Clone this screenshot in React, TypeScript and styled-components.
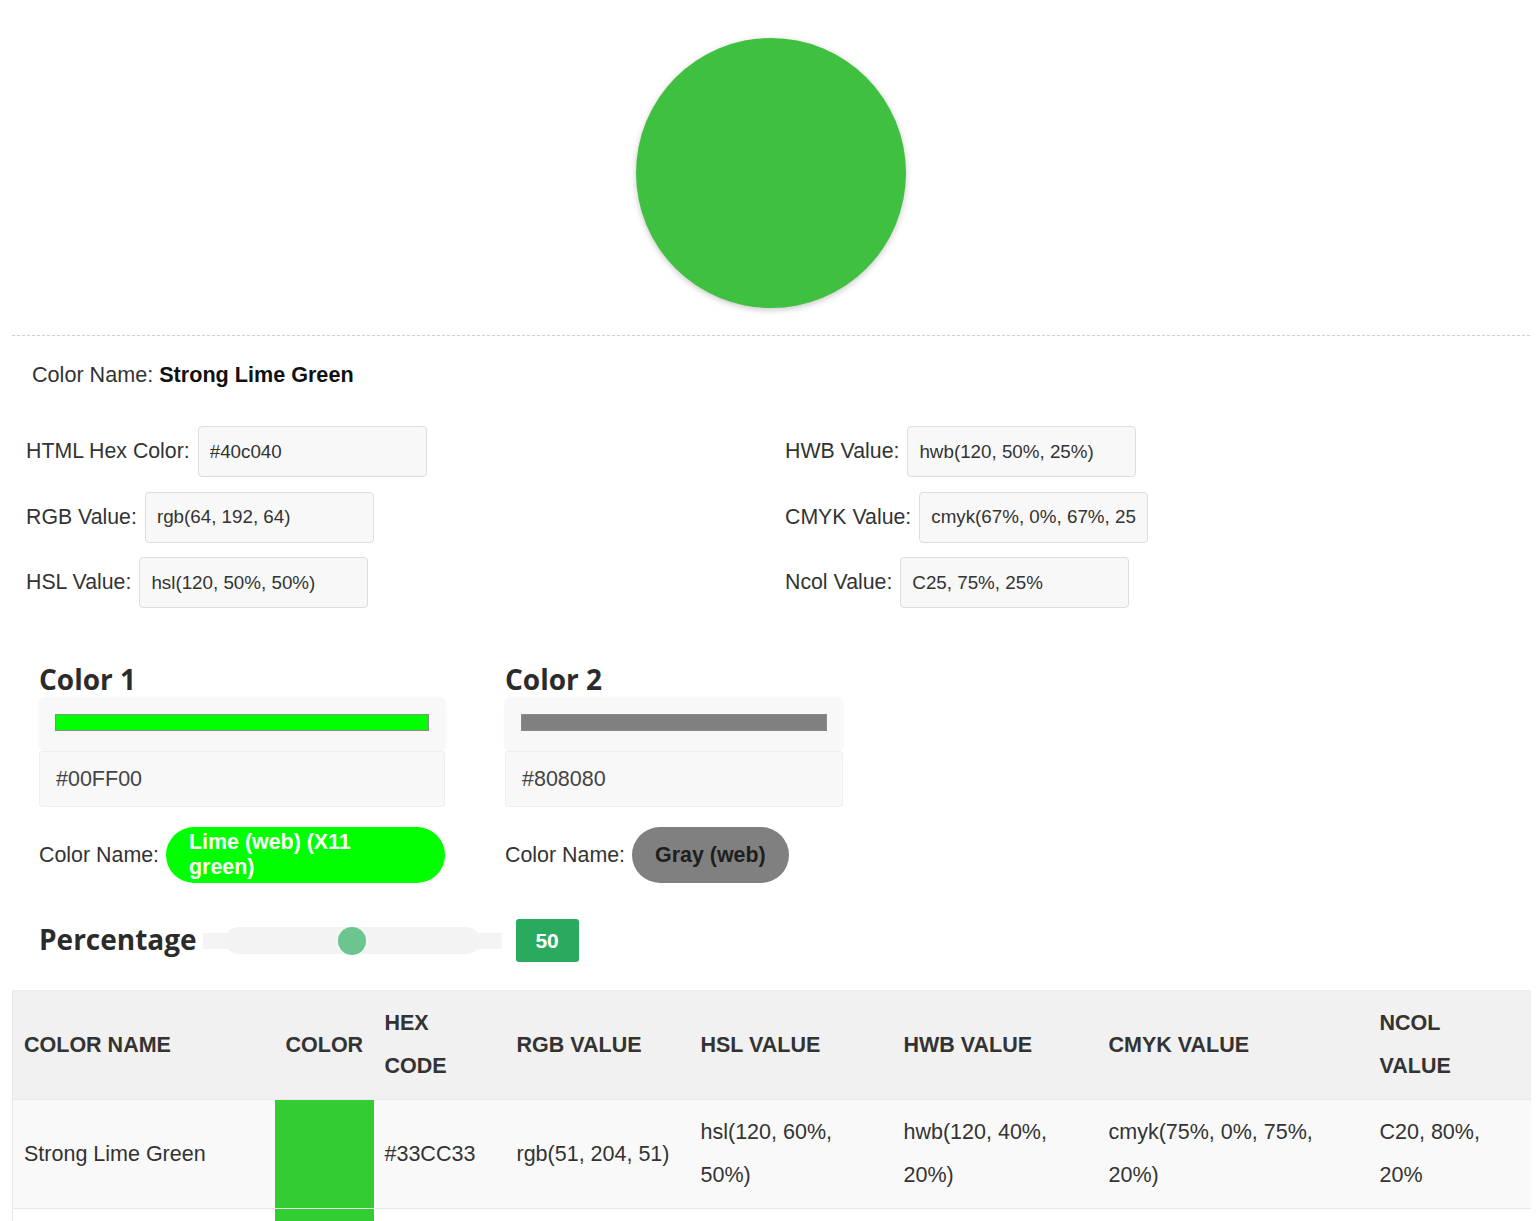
import React from 'react'
import styled, { createGlobalStyle } from 'styled-components'

const GlobalStyle = createGlobalStyle`
    body {
        margin: 0;
        background: #ffffff;
        font-family: 'Liberation Sans', Arial, sans-serif;
        color: #333333;
    }
    * {
        box-sizing: border-box;
    }
`

const Page = styled.div`
    padding: 0 6px 0 12px;
`

const Preview = styled.div`
    display: flex;
    justify-content: center;
    padding: 38px 0 27px;
    border-bottom: 1px dashed #d0d0d0;
`

const Swatch = styled.div<{ color: string }>`
    width: 270px;
    height: 270px;
    border-radius: 50%;
    background: ${(props) => props.color};
    box-shadow: 0 2px 6px rgba(0, 0, 0, 0.22);
`

const NameLine = styled.div`
    margin-top: 26px;
    padding-left: 20px;
    font-size: 21.6px;
    line-height: 26px;
    color: #333;

    strong {
        color: #111;
    }
`

const ValueGrid = styled.div`
    display: grid;
    grid-template-columns: 1fr 1fr;
    margin-top: 38px;
`

const ValueColumn = styled.div`
    display: flex;
    flex-direction: column;
    gap: 14.5px;
    padding: 0 14px;
`

const ValueRow = styled.label`
    display: flex;
    align-items: center;
    gap: 8px;
    font-size: 21.3px;
    color: #333;
`

const ValueInput = styled.input`
    width: 229px;
    height: 51px;
    padding: 0 11px;
    border: 1px solid #dddddd;
    border-radius: 4px;
    background: #f8f8f8;
    font-family: 'Liberation Sans', Arial, sans-serif;
    font-size: 18.8px;
    color: #333;
    outline: none;
`

const MixRow = styled.div`
    display: flex;
    gap: 60px;
    margin-top: 53px;
    padding-left: 27px;
`

const MixColumn = styled.div<{ width: number }>`
    width: ${(props) => props.width}px;
`

const Heading = styled.h2`
    margin: 0;
    font-family: 'Open Sans', sans-serif;
    font-weight: 700;
    font-size: 28px;
    line-height: 36px;
    color: #2b2b2b;
`

const BarCard = styled.div`
    height: 53px;
    padding: 17px 16px 0;
    border-radius: 6px;
    background: #f8f8f8;
    box-shadow: 0 1px 3px rgba(0, 0, 0, 0.06);
`

const Bar = styled.div<{ color: string }>`
    height: 17px;
    border: 1px solid #8a8a8a;
    background: ${(props) => props.color};
`

const HexBox = styled.div`
    height: 56px;
    margin-top: 1px;
    padding-left: 16px;
    display: flex;
    align-items: center;
    border: 1px solid #eeeeee;
    border-radius: 3px;
    background: #f8f8f8;
    font-size: 21.5px;
    color: #444;
`

const NameRow = styled.div`
    display: flex;
    align-items: center;
    gap: 7px;
    margin-top: 20px;
    font-size: 21.4px;
    color: #333;
`

const Pill = styled.span<{ color: string; text: string }>`
    display: inline-flex;
    align-items: center;
    height: 56px;
    padding: 0 23px;
    border-radius: 28px;
    background: ${(props) => props.color};
    color: ${(props) => props.text};
    font-weight: 700;
    font-size: 21.4px;
`

const PercentRow = styled.div`
    display: flex;
    align-items: center;
    margin-top: 36px;
    padding-left: 27px;
`

const PercentHeading = styled(Heading)`
    margin-top: -4px;
`

const Track = styled.div`
    display: flex;
    align-items: center;
    width: 299px;
    height: 16px;
    margin-left: 6px;
    padding: 0 22px 0 22px;
    background: #f4f4f4;
`

const TrackInner = styled.div`
    position: relative;
    flex: 1;
    height: 27px;
    border-radius: 14px;
    background: #f3f3f3;
`

const Thumb = styled.span`
    position: absolute;
    top: -0.5px;
    width: 28px;
    height: 28px;
    margin-left: -14px;
    border-radius: 50%;
    background: #6cc48f;
`

const ValueBadge = styled.div`
    display: flex;
    align-items: center;
    justify-content: center;
    width: 63px;
    height: 43px;
    margin-left: 14px;
    border-radius: 3px;
    background: #2aaa5f;
    color: #ffffff;
    font-weight: 700;
    font-size: 21px;
`

const Table = styled.table`
    width: 100%;
    margin-top: 28px;
    border-collapse: collapse;
    table-layout: fixed;
    border-left: 1px solid #e6e6e6;
    font-size: 21.5px;
`

const HeadCell = styled.th`
    padding: 11px 12px 11px 11px;
    background: #f1f1f1;
    border-top: 1px solid #ececec;
    text-align: left;
    vertical-align: middle;
    line-height: 43px;
    font-weight: 700;
    color: #333;
    white-space: nowrap;
`

const HeadLine = styled.span`
    display: block;
`

const Row = styled.tr<{ $shade: boolean }>`
    background: ${(props) => (props.$shade ? '#f9f9f9' : '#ffffff')};
    border-top: 1px solid #e8e8e8;
`

const Cell = styled.td`
    padding: 11px 12px 11px 11px;
    vertical-align: middle;
    line-height: 43px;
    color: #333;
`

const ColorCell = styled.td<{ color: string }>`
    padding: 0;
    background: ${(props) => props.color};
`

const values = {
    left: [
        { label: 'HTML Hex Color:', value: '#40c040' },
        { label: 'RGB Value:', value: 'rgb(64, 192, 64)' },
        { label: 'HSL Value:', value: 'hsl(120, 50%, 50%)' },
    ],
    right: [
        { label: 'HWB Value:', value: 'hwb(120, 50%, 25%)' },
        { label: 'CMYK Value:', value: 'cmyk(67%, 0%, 67%, 25%)' },
        { label: 'Ncol Value:', value: 'C25, 75%, 25%' },
    ],
}

const mixes = [
    { title: 'Color 1', width: 406, hex: '#00FF00', name: 'Lime (web) (X11 green)', text: '#ffffff' },
    { title: 'Color 2', width: 338, hex: '#808080', name: 'Gray (web)', text: '#1e1e1e' },
]

const columns = [
    { width: 262, label: ['COLOR NAME'] },
    { width: 99, label: ['COLOR'] },
    { width: 132, label: ['HEX', 'CODE'] },
    { width: 184, label: ['RGB VALUE'] },
    { width: 203, label: ['HSL VALUE'] },
    { width: 205, label: ['HWB VALUE'] },
    { width: 271, label: ['CMYK VALUE'] },
    { width: 162, label: ['NCOL', 'VALUE'] },
]

const shades = [
    {
        name: 'Strong Lime Green',
        hex: '#33CC33',
        rgb: 'rgb(51, 204, 51)',
        hsl: 'hsl(120, 60%, 50%)',
        hwb: 'hwb(120, 40%, 20%)',
        cmyk: 'cmyk(75%, 0%, 75%, 20%)',
        ncol: 'C20, 80%, 20%',
    },
    {
        name: 'Lime Green',
        hex: '#32CD32',
        rgb: 'rgb(50, 205, 50)',
        hsl: 'hsl(120, 61%, 50%)',
        hwb: 'hwb(120, 20%, 20%)',
        cmyk: 'cmyk(76%, 0%, 76%, 20%)',
        ncol: 'G00, 20%, 20%',
    },
]

const percentage = 50

const App = () => {
    return (
        <Page>
            <GlobalStyle />
            <Preview>
                <Swatch color="#40c040" />
            </Preview>
            <NameLine>
                Color Name: <strong>Strong Lime Green</strong>
            </NameLine>
            <ValueGrid>
                {[values.left, values.right].map((column, index) => (
                    <ValueColumn key={index}>
                        {column.map(({ label, value }) => (
                            <ValueRow key={label}>
                                {label}
                                <ValueInput readOnly value={value} />
                            </ValueRow>
                        ))}
                    </ValueColumn>
                ))}
            </ValueGrid>
            <MixRow>
                {mixes.map(({ title, width, hex, name, text }) => (
                    <MixColumn key={title} width={width}>
                        <Heading>{title}</Heading>
                        <BarCard>
                            <Bar color={hex} />
                        </BarCard>
                        <HexBox>{hex}</HexBox>
                        <NameRow>
                            Color Name:
                            <Pill color={hex} text={text}>
                                {name}
                            </Pill>
                        </NameRow>
                    </MixColumn>
                ))}
            </MixRow>
            <PercentRow>
                <PercentHeading>Percentage</PercentHeading>
                <Track>
                    <TrackInner>
                        <Thumb style={{ left: `${percentage}%` }} />
                    </TrackInner>
                </Track>
                <ValueBadge>{percentage}</ValueBadge>
            </PercentRow>
            <Table>
                <colgroup>
                    {columns.map(({ width }, index) => (
                        <col key={index} style={{ width }} />
                    ))}
                </colgroup>
                <thead>
                    <tr>
                        {columns.map(({ label }, index) => (
                            <HeadCell key={index}>
                                {label.map((line) => (
                                    <HeadLine key={line}>{line}</HeadLine>
                                ))}
                            </HeadCell>
                        ))}
                    </tr>
                </thead>
                <tbody>
                    {shades.map((shade, index) => (
                        <Row key={shade.hex} $shade={index === 0}>
                            <Cell>{shade.name}</Cell>
                            <ColorCell color={shade.hex} />
                            <Cell>{shade.hex}</Cell>
                            <Cell>{shade.rgb}</Cell>
                            <Cell>{shade.hsl}</Cell>
                            <Cell>{shade.hwb}</Cell>
                            <Cell>{shade.cmyk}</Cell>
                            <Cell>{shade.ncol}</Cell>
                        </Row>
                    ))}
                </tbody>
            </Table>
        </Page>
    )
}

export default App
